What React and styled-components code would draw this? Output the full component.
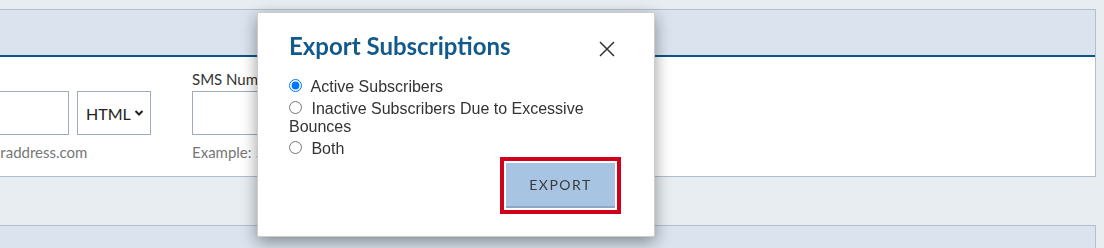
import React from "react";
import styled, { createGlobalStyle } from "styled-components";

const GlobalStyle = createGlobalStyle`
  html, body {
    margin: 0;
    overflow: hidden;
    background: #e8edf2;
  }
`;

const Page = styled.div`
  padding-top: 9px;
  height: 239px;
  overflow: hidden;
  font-family: "Lato", "Open Sans", sans-serif;
`;

const Panel = styled.section`
  margin: 0 8px 48px -141px;
  border: 1px solid #b2bfcf;
  background: #dae3ee;
`;

const PanelHeader = styled.div`
  height: 45px;
  border-bottom: 2px solid #0e5486;
`;

const PanelBody = styled.div`
  background: #fff;
  height: 119px;
  box-sizing: border-box;
  padding: 13px 0 0 16px;
  display: flex;
  gap: 41px;
`;

const FieldGroup = styled.div`
  display: flex;
  flex-direction: column;
`;

const Label = styled.label`
  font-size: 15px;
  line-height: 18px;
  color: #333;
  margin-bottom: 3px;
`;

const InputRow = styled.div`
  display: flex;
  gap: 8px;
`;

const TextInput = styled.input`
  width: ${(p) => p.$width}px;
  height: 44px;
  box-sizing: border-box;
  border: 1px solid #9eacbc;
  background: #fff;
`;

const Select = styled.div`
  width: 74px;
  height: 44px;
  box-sizing: border-box;
  border: 1px solid #9eacbc;
  display: flex;
  align-items: center;
  justify-content: space-between;
  padding: 0 6px 0 8px;
  font-size: 16px;
  color: #222;
`;

const Help = styled.div`
  margin-top: 8px;
  font-size: 15px;
  line-height: 18px;
  color: #777;
  white-space: nowrap;
`;

const Overlay = styled.div`
  position: fixed;
  left: 257px;
  top: 12px;
  width: 398px;
  box-sizing: border-box;
  background: #fff;
  border: 1px solid rgba(0, 0, 0, 0.2);
  box-shadow: 0 5px 15px rgba(0, 0, 0, 0.4);
  padding: 18px 39px 28px 31px;
`;

const ModalHead = styled.div`
  display: flex;
  justify-content: space-between;
  align-items: flex-start;
`;

const Title = styled.h2`
  margin: 0;
  font-size: 24px;
  line-height: 29px;
  font-weight: 700;
  color: #135a8c;
`;

const Close = styled.button`
  margin-top: 10px;
  padding: 0;
  border: 0;
  background: none;
  width: 16px;
  height: 16px;
  display: flex;
`;

const Options = styled.div`
  margin-top: 18px;
  display: flex;
  flex-direction: column;
  gap: 4px;
  font-family: "Liberation Sans", Arial, sans-serif;
  font-size: 16px;
  line-height: 18px;
  color: #333;
`;

const Option = styled.label`
  display: block;
  input {
    margin: 0 5px 0 0;
    width: 13px;
    height: 13px;
  }
`;

const Actions = styled.div`
  margin-top: 5px;
  display: flex;
  justify-content: flex-end;
`;

const ExportButton = styled.button`
  width: 109px;
  height: 45px;
  border: 0;
  border-bottom: 2px solid #8ea8c3;
  background: #a7c4e2;
  color: #3b3b3b;
  font-family: "Lato", "Open Sans", sans-serif;
  font-size: 14px;
  letter-spacing: 1.5px;
  outline: 4px solid #d0021b;
  outline-offset: 2px;
`;

export default function App() {
  return (
    <Page>
      <GlobalStyle />
      <Panel>
        <PanelHeader />
        <PanelBody>
          <FieldGroup>
            <Label>Email</Label>
            <InputRow>
              <TextInput $width={193} />
              <Select>
                HTML
                <svg width="10" height="8" viewBox="0 0 10 8">
                  <path d="M1.5 2 L5 5.5 L8.5 2" fill="none" stroke="#222" strokeWidth="2" />
                </svg>
              </Select>
            </InputRow>
            <Help>Example: you@youraddress.com</Help>
          </FieldGroup>
          <FieldGroup>
            <Label>SMS Number</Label>
            <TextInput $width={200} />
            <Help>Example: 5555555555</Help>
          </FieldGroup>
        </PanelBody>
      </Panel>
      <Panel>
        <PanelHeader />
      </Panel>

      <Overlay>
        <ModalHead>
          <Title>Export Subscriptions</Title>
          <Close aria-label="Close">
            <svg width="16" height="16" viewBox="0 0 16 16">
              <path d="M1 1 L15 15 M15 1 L1 15" stroke="#333" strokeWidth="1.5" />
            </svg>
          </Close>
        </ModalHead>
        <Options>
          <Option>
            <input type="radio" name="exp" defaultChecked /> Active Subscribers
          </Option>
          <Option>
            <input type="radio" name="exp" /> Inactive Subscribers Due to Excessive Bounces
          </Option>
          <Option>
            <input type="radio" name="exp" /> Both
          </Option>
        </Options>
        <Actions>
          <ExportButton>EXPORT</ExportButton>
        </Actions>
      </Overlay>
    </Page>
  );
}
